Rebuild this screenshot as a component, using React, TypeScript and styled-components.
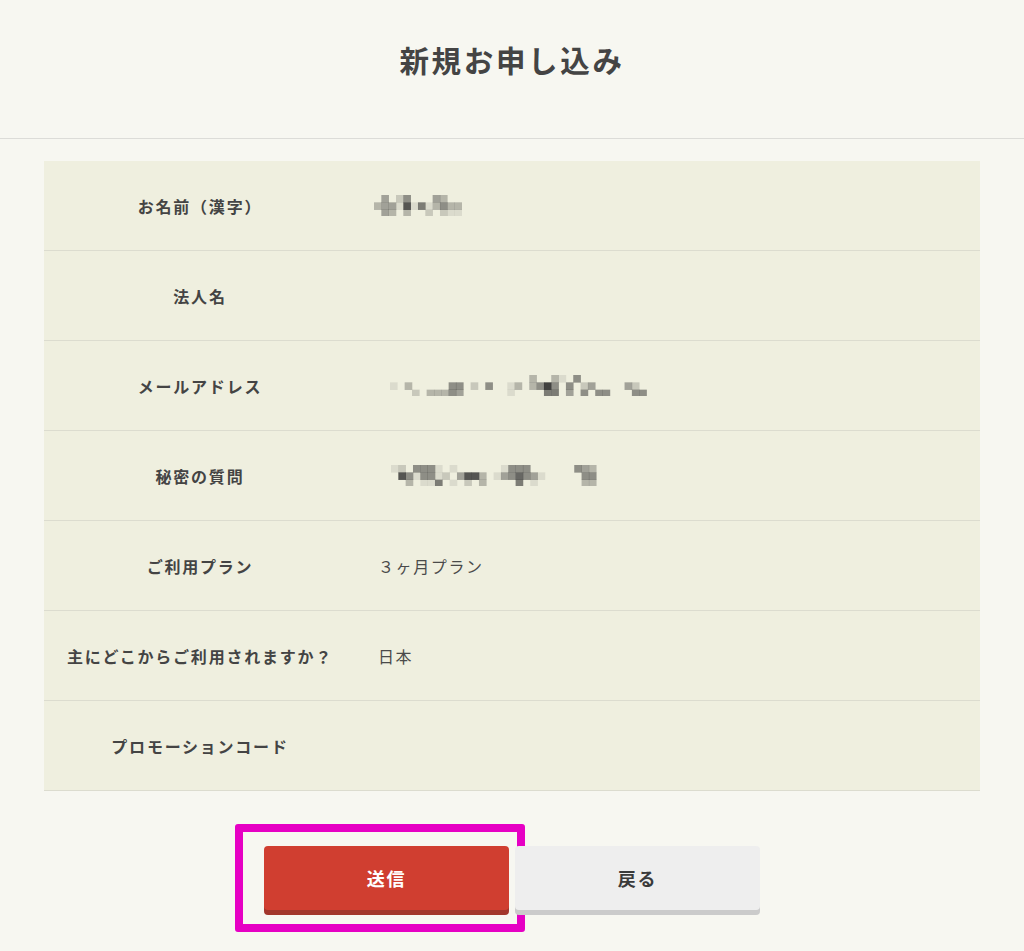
import React from "react";
import styled, { createGlobalStyle } from "styled-components";

const GlobalStyle = createGlobalStyle`
  html, body {
    margin: 0;
    padding: 0;
    background: #f7f7f1;
  }
  body {
    font-family: "Noto Sans CJK JP", "Noto Sans", sans-serif;
    color: #444444;
    letter-spacing: 0.1em;
  }
`;

const Page = styled.div`
  min-height: 951px;
  background: #f7f7f1;
`;

const Header = styled.header`
  height: 138px;
  border-bottom: 1px solid #dcdcd8;
  display: flex;
  justify-content: center;

  h1 {
    margin: 37px 0 0;
    font-size: 29.5px;
    line-height: 44px;
    font-weight: 700;
    letter-spacing: 0.09em;
    color: #444444;
  }
`;

const Table = styled.div`
  margin: 22px 44px 0;
  background: #efefdf;
`;

const Row = styled.div`
  display: flex;
  align-items: center;
  height: 89px;
  border-bottom: 1px solid #dcdccf;
`;

const Label = styled.div`
  width: 312px;
  flex-shrink: 0;
  text-align: center;
  font-size: 16px;
  font-weight: 700;
  letter-spacing: 0.11em;
  color: #444444;
`;

const Value = styled.div`
  padding-left: 22px;
  font-size: 16px;
  font-weight: 400;
  color: #4a4a4a;
  display: flex;
  align-items: center;
`;

const Actions = styled.div`
  display: flex;
  justify-content: center;
  gap: 6px;
  padding-top: 55px;
`;

const ButtonWrap = styled.div`
  position: relative;
`;

const Button = styled.button<{ $primary?: boolean }>`
  width: 245px;
  height: 64px;
  margin-bottom: 5px;
  border: none;
  border-radius: 4px;
  font-family: "Noto Sans CJK JP", "Noto Sans", sans-serif;
  font-size: 18px;
  font-weight: 700;
  letter-spacing: 0.1em;
  cursor: pointer;
  background: ${(p) => (p.$primary ? "#d03e30" : "#eeeeee")};
  color: ${(p) => (p.$primary ? "#ffffff" : "#3a3a3a")};
  box-shadow: 0 5px 0 ${(p) => (p.$primary ? "#a2362c" : "#cbcbcb")};
`;

const Highlight = styled.div`
  position: absolute;
  left: -29px;
  top: -22px;
  width: 290px;
  height: 108px;
  box-sizing: border-box;
  border: 8px solid #e600c4;
  border-radius: 3px;
  pointer-events: none;
`;

type MosaicProps = { rows: string[]; offsetX?: number };

// pixelated (redacted) text; each digit is a grey level, 0 = empty
function Mosaic({ rows, offsetX = 0 }: MosaicProps) {
  const cell = 7.33;
  const cols = Math.max(...rows.map((r) => r.length));
  return (
    <svg
      width={cols * cell}
      height={rows.length * cell}
      style={{ marginLeft: offsetX, display: "block" }}
    >
      {rows.map((r, y) =>
        r.split("").map((c, x) => {
          const v = parseInt(c, 10);
          if (!v) return null;
          return (
            <rect
              key={`${x}-${y}`}
              x={x * cell}
              y={y * cell}
              width={cell + 0.3}
              height={cell + 0.3}
              fill="#2e2e2e"
              fillOpacity={v / 10}
            />
          );
        })
      )}
    </svg>
  );
}

const nameMosaic = [
  "040250004300",
  "344181613533",
  "043030020211",
];

const mailMosaic = [
  "00000000000000000003003105000000000",
  "10300000550205001303595050240000420",
  "00020333540000001000066040505500055",
];

const secretMosaic = [
  "1205551010000001555000000543000",
  "0851551204883014575410000055000",
  "0030116010203000060100000033000",
];

const rows: { label: string; value?: React.ReactNode }[] = [
  { label: "お名前（漢字）", value: <Mosaic rows={nameMosaic} offsetX={-4} /> },
  { label: "法人名" },
  { label: "メールアドレス", value: <Mosaic rows={mailMosaic} offsetX={12} /> },
  { label: "秘密の質問", value: <Mosaic rows={secretMosaic} offsetX={13} /> },
  { label: "ご利用プラン", value: "３ヶ月プラン" },
  { label: "主にどこからご利用されますか？", value: "日本" },
  { label: "プロモーションコード" },
];

export default function App() {
  return (
    <Page>
      <GlobalStyle />
      <Header>
        <h1>新規お申し込み</h1>
      </Header>
      <Table>
        {rows.map((r) => (
          <Row key={r.label}>
            <Label>{r.label}</Label>
            <Value>{r.value}</Value>
          </Row>
        ))}
      </Table>
      <Actions>
        <ButtonWrap>
          <Button $primary>送信</Button>
          <Highlight />
        </ButtonWrap>
        <ButtonWrap>
          <Button>戻る</Button>
        </ButtonWrap>
      </Actions>
    </Page>
  );
}
